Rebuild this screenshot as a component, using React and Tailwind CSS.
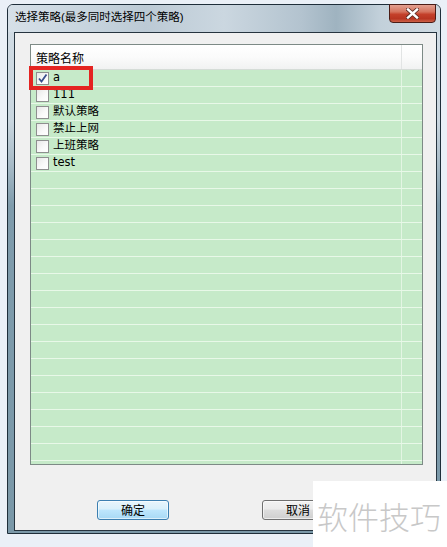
export default function App() {
  const rows = [
    { t: 'a', c: true },
    { t: '111' },
    { t: '默认策略' },
    { t: '禁止上网' },
    { t: '上班策略' },
    { t: 'test' },
  ];
  const all = Array.from({ length: 24 }, (_, i) => rows[i] || null);

  return (
    <div className="relative w-[447px] h-[547px] overflow-hidden bg-[#eaf0f7] font-['Liberation_Sans','Noto_Sans_CJK_SC',sans-serif] text-[12px] text-black">
      <div className="pt-[4px] pl-[7px]">
        <div className="relative w-[434px] h-[530px] flex flex-col border border-[#1e2e3a] rounded-t-[6px] bg-[linear-gradient(180deg,#d3dde5_0%,#c9d6df_22%,#a9bcc8_30%,#7f9cac_38%,#7a98a8_100%)]">
          <div className="h-[27px] shrink-0 flex items-center pl-[7px] rounded-t-[5px] bg-[linear-gradient(90deg,#d6e0e8_0%,#c6d3dd_20%,#bccad5_32%,#cbd7e0_50%,#b3c3cf_68%,#9fb3c0_76%,#c2d0da_86%,#cfdbe3_100%)]">
            <span className="font-['Liberation_Sans','Noto_Sans_CJK_SC',sans-serif] text-[11.5px] leading-none mt-[-1px]">
              选择策略(最多同时选择四个策略)
            </span>
          </div>
          <div className="flex flex-1 pl-[6px] pr-[3px] pb-[2px]">
            <div className="w-[423px] h-[499px] border border-[#26343f] bg-[#f0f0f0] flex flex-col">
              <div className="ml-[15px] mt-[11px] w-[393px] h-[421px] border border-[#7d8a86] bg-[#c6eac9] flex flex-col overflow-hidden">
                <div className="h-[25px] shrink-0 flex border-b border-[#d5dcd7] bg-[linear-gradient(180deg,#ffffff_0%,#fbfbfb_50%,#f1f2f2_100%)]">
                  <div className="w-[371px] border-r border-[#e2e4e4] flex items-center pl-[5px]">
                    <span className="font-['Noto_Sans_CJK_SC',sans-serif] leading-none mt-[2px]">策略名称</span>
                  </div>
                  <div className="flex-1" />
                </div>
                {all.map((r, i) => (
                  <div key={i} className="h-[17px] shrink-0 flex border-b border-[#e8f8e8]">
                    <div className="w-[371px] border-r border-[#e3f5e3] flex items-center pl-[5px] gap-[4px]">
                      {r && (
                        <>
                          <div className="w-[13px] h-[13px] border border-[#8e8f8f] bg-[linear-gradient(135deg,#e8e8e8_0%,#fafafa_60%,#ffffff_100%)] flex items-center justify-center">
                            {r.c && (
                              <svg width="11" height="11" viewBox="0 0 11 11">
                                <path d="M2 5.5 L4.5 8.5 L9.5 1.5" fill="none" stroke="#3a4f8c" strokeWidth="1.8" />
                              </svg>
                            )}
                          </div>
                          <span className="leading-none font-['DejaVu_Sans','Noto_Sans_CJK_SC',sans-serif] text-[11.5px]">{r.t}</span>
                        </>
                      )}
                    </div>
                    <div className="flex-1" />
                  </div>
                ))}
              </div>
              <div className="flex mt-[35px]">
                <div className="ml-[82px] w-[72px] h-[20px] rounded-[3px] border border-[#3c7fb1] bg-[linear-gradient(180deg,#e8f5fc_0%,#d9f0fb_45%,#bee6fd_50%,#a7d9f5_100%)] shadow-[inset_0_0_0_1px_rgba(255,255,255,0.6)] flex items-center justify-center">
                  <span className="font-['Noto_Sans_CJK_SC',sans-serif] leading-none">确定</span>
                </div>
                <div className="ml-[93px] w-[72px] h-[20px] rounded-[3px] border border-[#707070] bg-[linear-gradient(180deg,#f2f2f2_0%,#ebebeb_45%,#dddddd_50%,#cfcfcf_100%)] shadow-[inset_0_0_0_1px_rgba(255,255,255,0.6)] flex items-center justify-center">
                  <span className="font-['Noto_Sans_CJK_SC',sans-serif] leading-none">取消</span>
                </div>
              </div>
            </div>
          </div>
        </div>
      </div>

      {/* close button */}
      <div className="absolute left-[389px] top-[4px] w-[47px] h-[19px] rounded-b-[4px] border border-[#4a1c16] bg-[linear-gradient(180deg,#e3a091_0%,#d5735d_40%,#c4402a_55%,#b83521_80%,#cc6148_100%)] flex items-center justify-center">
        <svg width="13" height="11" viewBox="0 0 13 11">
          <path d="M2 1.5 L11 9.5 M11 1.5 L2 9.5" stroke="#5a2a22" strokeWidth="4" strokeLinecap="square" />
          <path d="M2 1.5 L11 9.5 M11 1.5 L2 9.5" stroke="#ffffff" strokeWidth="2.4" strokeLinecap="square" />
        </svg>
      </div>

      {/* red highlight */}
      <div className="absolute left-[29px] top-[66px] w-[64px] h-[24px] border-[4px] border-[#e42421]" />

      {/* watermark */}
      <div className="absolute left-[313px] top-[481px] w-[134px] h-[66px] bg-white flex items-center pl-[4px]">
        <span className="font-['Noto_Sans_CJK_SC',sans-serif] font-light text-[31px] leading-none text-[#c8c8c8] mt-[2px]">软件技巧</span>
      </div>
    </div>
  );
}
